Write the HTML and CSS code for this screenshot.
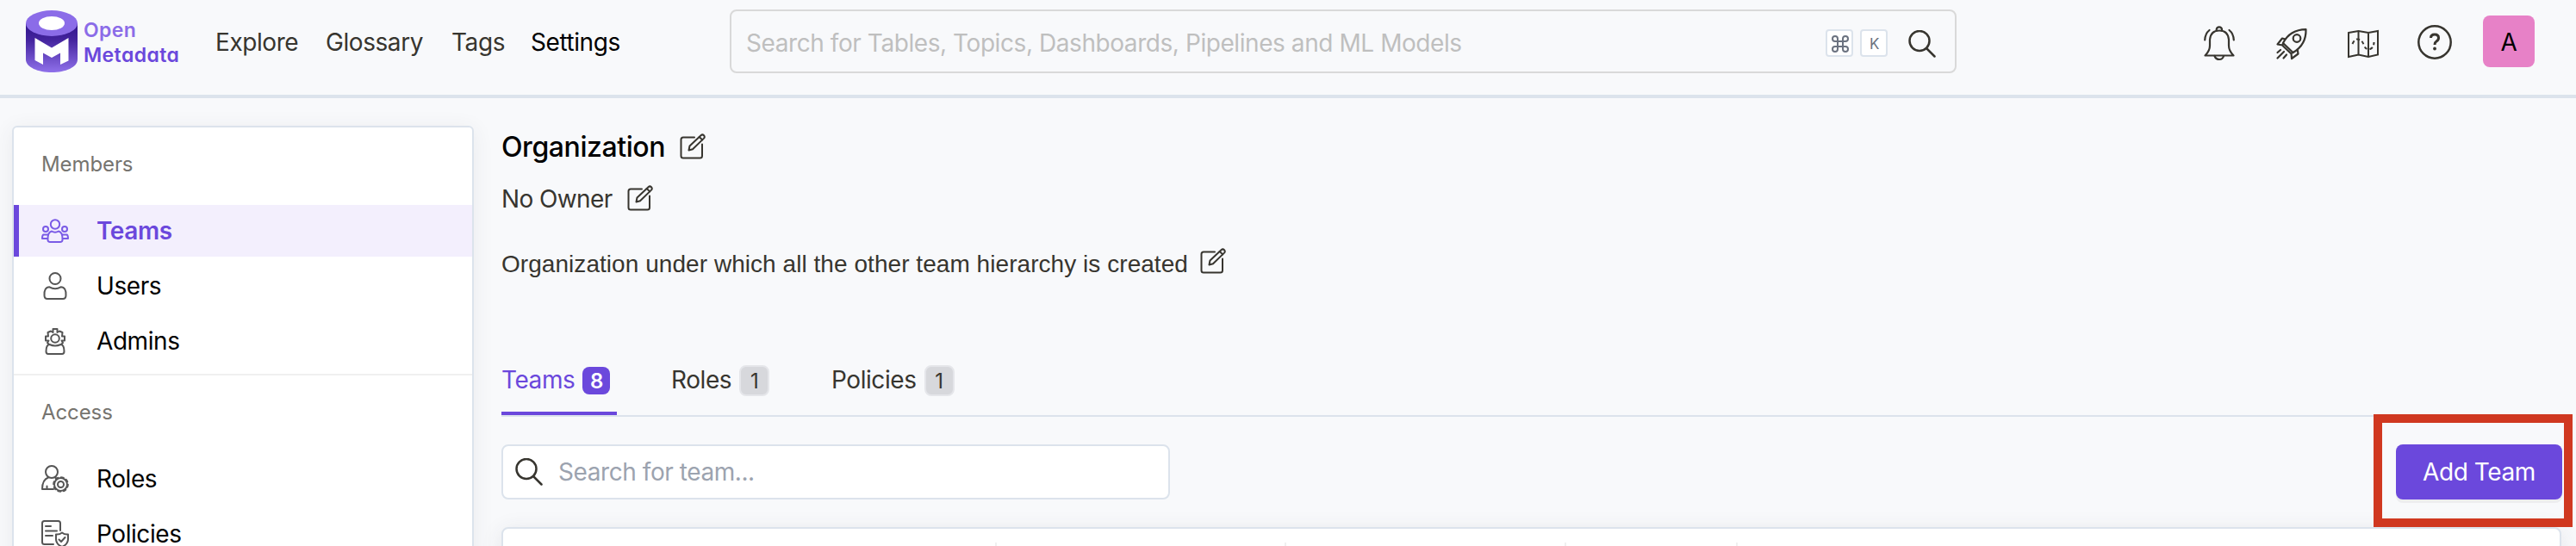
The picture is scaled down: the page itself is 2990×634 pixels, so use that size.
FILE: index.html
```html
<!DOCTYPE html>
<html lang="en">
<head>
<meta charset="utf-8">
<title>OpenMetadata</title>
<link rel="stylesheet" href="styles.css">
</head>
<body>
<svg class="defs" width="0" height="0" aria-hidden="true">
  <symbol id="edit" viewBox="0 0 30 30"><g fill="none" stroke="#37352f" stroke-width="2" stroke-linejoin="round" stroke-linecap="round"><path d="M17 4.500H4Q1.500 4.500 1.500 7V26Q1.500 28.500 4 28.500H23.500Q26 28.500 26 26V12.500"/><path d="M10.500 19.500L11.500 14.500L24.500 2.200Q26.300 .6 28 2.200Q29.500 3.900 28 5.600L15 18.200Z"/><path d="M22.700 4L26.200 7.400"/></g></symbol>
  <symbol id="search" viewBox="0 0 32 32"><g fill="none" stroke="#37352f" stroke-width="2.500" stroke-linecap="round"><circle cx="13" cy="12.500" r="11.500"/><path d="M21 21L30.500 30.500"/></g></symbol>
</svg>
<header class="topbar">
  <a class="logo">
    <svg width="60" height="72" viewBox="0 0 60 72">
      <defs><linearGradient id="body" x1="0" y1="0" x2="0" y2="1"><stop offset="0" stop-color="#2f1489"/><stop offset=".35" stop-color="#45259f"/><stop offset="1" stop-color="#8f70ea"/></linearGradient></defs>
      <path d="M0 15V57C0 66 14 72 30 72S60 66 60 57V15Z" fill="url(#body)"/>
      <ellipse cx="30" cy="15" rx="30" ry="15" fill="#8b6ce8"/>
      <ellipse cx="30" cy="15" rx="15" ry="8" fill="#fff"/>
      <path d="M10.500 32L30 43.500L49.500 32V58.500L40 63V49.500L30 55L20 49.500V63L10.500 58Z" fill="#fff"/>
    </svg>
    <span class="wordmark"><span class="open">Open</span><span class="meta">Metadata</span></span>
  </a>
  <nav class="nav"><a class="n1">Explore</a><a class="n2">Glossary</a><a class="n3">Tags</a><a class="n4 active">Settings</a></nav>
  <div class="searchbar">
    <span class="ph">Search for Tables, Topics, Dashboards, Pipelines and ML Models</span>
    <span class="kbd"><svg width="20" height="20" viewBox="0 0 20 20" fill="none" stroke="#6b7280" stroke-width="2"><path d="M7 7V4A3 3 0 1 0 4 7H16A3 3 0 1 0 13 4V16A3 3 0 1 0 16 13H4A3 3 0 1 0 7 16Z"/></svg></span>
    <span class="kbd">K</span>
    <svg class="find" width="32" height="32"><use href="#search"/></svg>
  </div>
  <div class="tools">
    <svg width="36" height="40" viewBox="0 0 36 40" fill="none" stroke="#37352f" stroke-width="2.200" stroke-linecap="round" stroke-linejoin="round"><path d="M1.500 34.500H34.500Q29 29 29 23V16Q28 5.500 18 5.500T7 16V23Q7 29 1.500 34.500Z"/><path d="M14.700 5.500V4A3.200 3.200 0 0 1 21 4V5.500M12.500 35Q14 39 18 39T23 35M1.200 16.500Q1.500 9 6.500 5M34.800 16.500Q34.500 9 29.500 5"/></svg>
    <svg width="36" height="36" viewBox="0 0 36 36" fill="none" stroke="#37352f" stroke-width="2.200" stroke-linecap="round" stroke-linejoin="round"><path d="M8 17Q16 1.500 34.500 1.200Q35 19 19.500 28Z"/><circle cx="24" cy="11.500" r="4.300"/><path d="M8 17L7.500 20L17 29L19.500 28M10.500 12.500L7 11.500L1.500 18.500L7.500 19.500M24.800 25L25.500 29.500L18 35L17.500 29M5 25L1.500 28M9 27L1.500 34.500M12 30.500L8.500 34.500"/></svg>
    <svg width="36" height="32" viewBox="0 0 36 32" fill="none" stroke="#37352f" stroke-width="2"><path d="M1 3L12.500 1L24 3L35 1V28.500L24 31L12.500 28.500L1 31ZM12.500 1V28.500M24 3V31"/><path d="M5.500 16Q8 10.500 11 10.500Q17 11 18.500 17Q21 23.500 26 22Q30.500 20 30.500 14" stroke-dasharray="4 3"/></svg>
    <svg width="40" height="40" viewBox="0 0 40 40" fill="none" stroke="#37352f" stroke-width="2.500"><circle cx="20" cy="20" r="18.700"/><path d="M15.500 15Q15.500 11 20 11T24.500 15Q24.500 17.500 22 19Q20 20.200 20 23" stroke-width="3"/><circle cx="20" cy="27.500" r="1.900" fill="#37352f" stroke="none"/></svg>
    <span class="avatar">A</span>
  </div>
</header>
<div class="page">
  <aside class="sidebar">
    <section>
      <h3>Members</h3>
      <a class="item on"><svg width="32" height="32" viewBox="0 0 32 32"><circle cx="16" cy="8.500" r="5.200"/><circle cx="5" cy="14" r="3"/><circle cx="27" cy="14" r="3"/><path d="M7.500 27Q7 17.500 12 16.500Q16 19 20 16.500Q25 17.500 24.500 27Q24 29 22 29H10Q8 29 7.500 27ZM7.500 20.500H2.500Q1 21 1 25H7M24.500 20.500H29.500Q31 21 31 25H25"/></svg><span>Teams</span></a>
      <a class="item"><svg width="32" height="32" viewBox="0 0 32 32"><circle cx="16" cy="7.500" r="6.500"/><path d="M3.500 27Q3 17.500 9.500 17.300Q16 21 22.500 17.300Q29 17.500 28.500 27Q28.500 31 25 31H7Q3.500 31 3.500 27Z"/></svg><span>Users</span></a>
      <a class="item"><svg width="32" height="32" viewBox="0 0 32 32"><circle cx="16" cy="13" r="4.800"/><path d="M9 20L7 18L8.500 15.500H5V10.500H8L7.500 6L11 4.500L13.500 6V2H18.500V6L21 4.500L24.500 6L24 10.500H27V15.500H23.500L25 18L23 20M5.500 28Q5.500 20.500 9.500 20Q16 23 22.500 20Q26.500 20.500 26.500 28Q26.500 31 24 31H8Q5.500 31 5.500 28Z"/></svg><span>Admins</span></a>
    </section>
    <section>
      <h3>Access</h3>
      <a class="item"><svg width="32" height="32" viewBox="0 0 32 32"><circle cx="12" cy="8" r="7"/><path d="M8 14.500Q1 17 1 28H14M6.500 28V24.500M16 14.500L18 16"/><circle cx="22.500" cy="22.500" r="3.500"/><circle cx="22.500" cy="22.500" r="7.500"/><circle cx="22.500" cy="22.500" r="8.600" stroke-dasharray="3.400 3.350" stroke-width="1.500"/></svg><span>Roles</span></a>
      <a class="item"><svg width="32" height="32" viewBox="0 0 32 32"><path d="M14 28H3.500Q1 28 1 25.500V3.500Q1 1 3.500 1H19.500Q22 1 22 3.500V12M5 7H11M5 12.500H18M5 18H13M24 14.500Q27 17 31 16.500V22Q31 28 24 31Q17 28 17 22V16.500Q21 17 24 14.500ZM20.500 22.500L23 25L27.500 20"/></svg><span>Policies</span></a>
    </section>
  </aside>
  <main class="main">
    <div class="row title"><h1>Organization</h1><svg width="30" height="30"><use href="#edit"/></svg></div>
    <div class="row owner"><span>No Owner</span><svg width="30" height="30"><use href="#edit"/></svg></div>
    <div class="row desc"><span>Organization under which all the other team hierarchy is created</span><svg width="30" height="30"><use href="#edit"/></svg></div>
    <div class="tabs">
      <div class="tab current"><span>Teams</span><b>8</b></div>
      <div class="tab t2"><span>Roles</span><b>1</b></div>
      <div class="tab t3"><span>Policies</span><b>1</b></div>
    </div>
    <div class="actions">
      <div class="filter"><svg width="32" height="32"><use href="#search"/></svg><span>Search for team...</span></div>
      <div class="addwrap"><button class="add">Add Team</button><div class="callout"></div></div>
    </div>
    <div class="table"><i></i><i></i><i></i><i></i><i></i></div>
  </main>
</div>
</body>
</html>
```

FILE: styles.css
```css
* { box-sizing: border-box; }
body { margin: 0; width: 2990px; height: 634px; overflow: hidden; background: #f8f9fb; font: 28px/40px Inter, "Liberation Sans", sans-serif; letter-spacing: -.43px; color: #37352f; }
.defs { position: absolute; }
svg { display: block; flex: none; overflow: visible; }
.topbar { display: flex; height: 114px; border-bottom: 4px solid #dce3ec; padding-left: 30px; white-space: nowrap; }
.logo { display: flex; width: 220px; padding-top: 12px; gap: 7px; }
.wordmark { display: flex; flex-direction: column; font-size: 23px; line-height: 29px; font-weight: 600; font-feature-settings: "cv11"; letter-spacing: .4px; padding-top: 9px; }
.open { color: #8b6ce8; }
.meta { color: #6b48dc; }
.nav { display: flex; width: 597px; padding-top: 29px; }
.n1 { width: 128px; }
.n2 { width: 146px; }
.n3 { width: 92px; }
.active { color: #000; }
.searchbar { display: flex; align-items: center; width: 1424px; height: 74px; margin-top: 11px; border: 2px solid #d9d9d9; border-radius: 8px; padding: 0 22px 0 17px; }
.ph { flex: 1; color: #bfbfbf; padding-top: 3px; }
.kbd { display: flex; align-items: center; justify-content: center; width: 32px; height: 32px; margin: 4px 8px 0 0; background: #fff; border: 2px solid #dce3ec; border-radius: 4px; font-size: 17px; line-height: 28px; color: #6b7280; padding-left: 1px; padding-top: 1px; }
.find { margin: 6px 0 0 16px; }
.tools { display: flex; align-items: center; flex: 1; height: 100px; padding: 0 48px 4px 0; justify-content: flex-end; }
.tools svg:nth-child(1) { margin: 4px 48px 0 0; }
.tools svg:nth-child(2) { margin: 5px 47px 0 0; }
.tools svg:nth-child(3) { margin: 5px 45px 0 0; }
.tools svg:nth-child(4) { margin: 2px 36px 0 0; }
.avatar { width: 60px; height: 60px; border-radius: 8px; background: #e781c7; color: #000; text-align: center; line-height: 63px; }
.page { display: flex; gap: 32px; padding: 32px 16px 0 14px; height: 520px; overflow: hidden; }
.sidebar { width: 536px; height: 600px; flex: none; background: #fff; border: 2px solid #dce3ec; border-radius: 6px; box-shadow: 0 4px 24px rgba(60,60,80,.08); color: #000; }
.sidebar section { height: 288px; border-bottom: 2px solid #f0f0f0; display: flex; flex-direction: column; gap: 4px; }
.sidebar h3 { margin: 0; padding: 26px 0 0 32px; height: 86px; font-size: 24px; line-height: 34px; font-weight: 400; letter-spacing: -.1px; color: #76746f; }
.item { display: flex; align-items: center; height: 60px; padding-left: 32px; gap: 32px; flex: none; }
.item svg { fill: none; stroke: #555; stroke-width: 2; stroke-linejoin: round; stroke-linecap: round; }
.item.on { background: #f3effd; border-left: 6px solid #6b48dc; padding-left: 26px; color: #6b48dc; font-weight: 600; }
.item.on svg { stroke: #7a5be6; }
.main { flex: 1; min-width: 0; height: 540px; }
.row { display: flex; gap: 17px; }
.title { height: 60px; padding-top: 5px; }
.title h1 { margin: 0; font-size: 32px; line-height: 40px; font-weight: 500; color: #000; }
.title svg { margin-top: 4px; }
.owner { height: 76px; padding-top: 5px; letter-spacing: -.6px; }
.owner svg { margin-top: 4px; }
.desc { height: 130px; padding-top: 5px; font-family: "Liberation Sans", Arial, sans-serif; letter-spacing: .05px; gap: 14px; }
.desc svg { margin-top: 1px; }
.tabs { display: flex; gap: 63px; height: 72px; border-bottom: 2px solid #dce3ec; }
.tab { display: flex; gap: 9px; height: 70px; padding-top: 9px; }
.t2 { width: 123px; }
.tab b { width: 35px; height: 36px; margin-top: 3px; background: #d7d8dc; border: 2px solid #e5e6ea; border-radius: 8px; font-size: 24px; line-height: 34px; font-weight: 400; text-align: center; }
.current { width: 134px; color: #6b48dc; border-bottom: 4px solid #6b48dc; }
.current b { width: 32px; height: 32px; margin-top: 5px; line-height: 33px; background: #6b48dc; color: #fff; border: 0; font-weight: 600; }
.actions { display: flex; justify-content: space-between; padding-top: 32px; height: 128px; }
.filter { display: flex; align-items: center; width: 776px; height: 64px; border: 2px solid #dce3ec; border-radius: 8px; background: #fff; padding-left: 14px; gap: 18px; color: #9ca3af; }
.addwrap { position: relative; height: 64px; }
.add { width: 193px; height: 64px; border: 0; border-radius: 8px; background: #6b48dc; color: #fff; font: 28px/64px Inter, sans-serif; letter-spacing: -.43px; padding: 0; box-shadow: 0 4px 0 #ededef; }
.callout { position: absolute; left: -26px; top: -35px; width: 231px; height: 131px; border: 10px solid #d03820; }
.table { display: flex; height: 60px; width: 2391px; background: #fff; border: 2px solid #dce3ec; border-radius: 8px; padding-top: 16px; box-shadow: 0 4px 24px rgba(60,60,80,.1); }
.table i { height: 40px; border-right: 2px solid #f0f0f0; }
.table i:nth-child(1) { width: 573px; }
.table i:nth-child(2) { width: 336px; }
.table i:nth-child(3) { width: 325px; }
.table i:nth-child(4) { width: 199px; }
.table i:nth-child(5) { border: 0; }
```
